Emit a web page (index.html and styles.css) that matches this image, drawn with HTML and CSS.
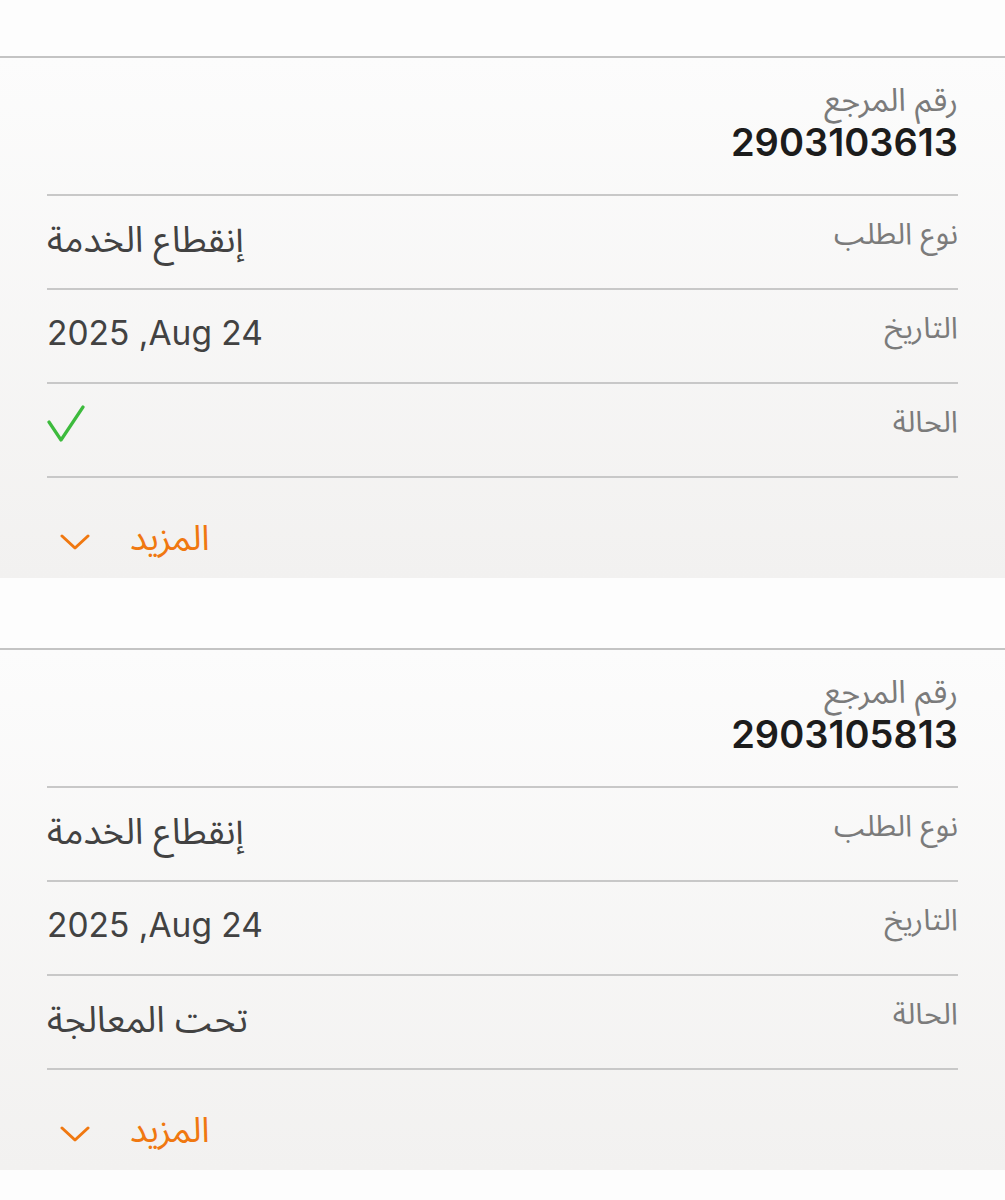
FILE: index.html
```html
<!DOCTYPE html>
<html lang="ar" dir="rtl">
  <head>
    <meta charset="UTF-8" />
    <meta name="viewport" content="width=device-width, initial-scale=1.0" />
    <title>طلباتي</title>
    <link rel="stylesheet" href="styles.css">
  </head>
  <body>
    <div class="list">
      <!-- request card -->
      <div class="card">
        <div class="ref">
          <div class="ref-label">رقم المرجع</div>
          <div class="ref-number">2903103613</div>
        </div>
        <div class="row">
          <span class="label">نوع الطلب</span>
          <span class="value">إنقطاع الخدمة</span>
        </div>
        <div class="row">
          <span class="label">التاريخ</span>
          <span class="value date">Aug 24&rlm;, 2025</span>
        </div>
        <div class="row">
          <span class="label">الحالة</span>
          <span class="value">
            <svg class="check" width="38" height="38" viewBox="0 0 38 38">
              <path d="M2 17 L14 35 L36 2" fill="none" stroke="#3dbb3d" stroke-width="3.2" stroke-linecap="round" stroke-linejoin="round" />
            </svg>
          </span>
        </div>
        <div class="more">
          <span class="more-text">المزيد</span>
          <svg class="chevron" width="32" height="18" viewBox="0 0 32 18">
            <path d="M2 3 L15 15 L28 3" fill="none" stroke="#f07810" stroke-width="3" stroke-linecap="round" stroke-linejoin="round" />
          </svg>
        </div>
      </div>

      <div class="card">
        <div class="ref">
          <div class="ref-label">رقم المرجع</div>
          <div class="ref-number">2903105813</div>
        </div>
        <div class="row">
          <span class="label">نوع الطلب</span>
          <span class="value">إنقطاع الخدمة</span>
        </div>
        <div class="row">
          <span class="label">التاريخ</span>
          <span class="value date">Aug 24&rlm;, 2025</span>
        </div>
        <div class="row">
          <span class="label">الحالة</span>
          <span class="value">تحت المعالجة</span>
        </div>
        <div class="more">
          <span class="more-text">المزيد</span>
          <svg class="chevron" width="32" height="18" viewBox="0 0 32 18">
            <path d="M2 3 L15 15 L28 3" fill="none" stroke="#f07810" stroke-width="3" stroke-linecap="round" stroke-linejoin="round" />
          </svg>
        </div>
      </div>
    </div>
  </body>
</html>
```

FILE: styles.css
```css
body {
  margin: 0;
  background-color: #fdfdfd;
  font-family: Inter, "Noto Sans Arabic", "DejaVu Sans", sans-serif;
  color: #444;
}
.list {
  padding-top: 56px;
}
.card {
  border-top: 2px solid #c4c4c4;
  background: linear-gradient(#fcfcfc, #f2f1f0);
  padding: 0 47px;
  margin-bottom: 70px;
}
.ref {
  padding: 23px 0 29px;
}
.ref-label {
  font-size: 32px;
  color: #7b7b7b;
  line-height: 38px;
}
.ref-number {
  font-size: 38px;
  font-weight: 600;
  color: #1c1c1c;
  line-height: 46px;
}
.row {
  display: flex;
  justify-content: space-between;
  align-items: flex-start;
  border-top: 2px solid #c8c8c8;
  height: 92px;
}
.label {
  font-size: 30px;
  color: #7b7b7b;
  line-height: 36px;
  padding-top: 19px;
}
.value {
  font-size: 36px;
  color: #424242;
  line-height: 44px;
  padding-top: 21px;
}
.date {
  font-size: 33.5px;
}
.check {
  display: block;
  margin-top: 0;
}
.more {
  display: flex;
  align-items: center;
  justify-content: flex-end;
  gap: 38px;
  border-top: 2px solid #c8c8c8;
  height: 100px;
}
.more-text {
  font-size: 35px;
  color: #f07810;
  padding-top: 22px;
}
.chevron {
  display: block;
  margin-left: 13px;
  margin-top: 28px;
}
```
